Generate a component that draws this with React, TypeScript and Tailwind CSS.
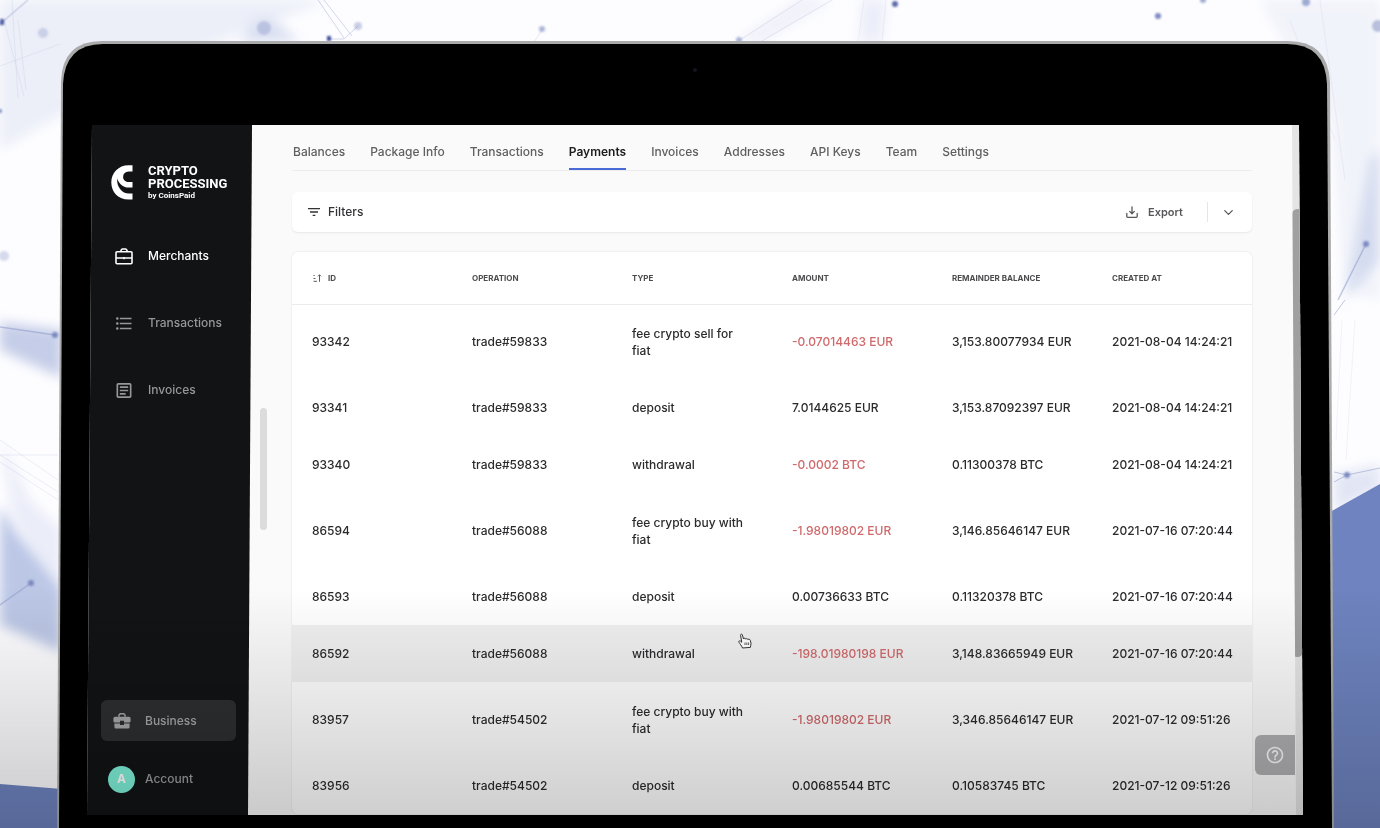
import React from "react";
import { MdFilterList, MdFormatListBulleted, MdHelpOutline, MdOutlineArticle } from "react-icons/md";
import { ChevronDown } from "lucide-react";

const TABS = ["Balances", "Package Info", "Transactions", "Payments", "Invoices", "Addresses", "API Keys", "Team", "Settings"];
const COLUMNS = ["ID", "Operation", "Type", "Amount", "Remainder balance", "Created at"];

type Row = [string, string, string, string, string, string];

const ROWS: Row[] = [
  ["93342", "trade#59833", "fee crypto sell for fiat", "-0.07014463 EUR", "3,153.80077934 EUR", "2021-08-04 14:24:21"],
  ["93341", "trade#59833", "deposit", "7.0144625 EUR", "3,153.87092397 EUR", "2021-08-04 14:24:21"],
  ["93340", "trade#59833", "withdrawal", "-0.0002 BTC", "0.11300378 BTC", "2021-08-04 14:24:21"],
  ["86594", "trade#56088", "fee crypto buy with fiat", "-1.98019802 EUR", "3,146.85646147 EUR", "2021-07-16 07:20:44"],
  ["86593", "trade#56088", "deposit", "0.00736633 BTC", "0.11320378 BTC", "2021-07-16 07:20:44"],
  ["86592", "trade#56088", "withdrawal", "-198.01980198 EUR", "3,148.83665949 EUR", "2021-07-16 07:20:44"],
  ["83957", "trade#54502", "fee crypto buy with fiat", "-1.98019802 EUR", "3,346.85646147 EUR", "2021-07-12 09:51:26"],
  ["83956", "trade#54502", "deposit", "0.00685544 BTC", "0.10583745 BTC", "2021-07-12 09:51:26"],
];

function Backdrop() {
  return (
    <svg className="absolute inset-0 h-full w-full" viewBox="0 0 1380 828" preserveAspectRatio="none" aria-hidden="true">
      <defs>
        <filter id="soft" x="-20%" y="-20%" width="140%" height="140%">
          <feGaussianBlur stdDeviation="6" />
        </filter>
        <filter id="dot" x="-60%" y="-60%" width="220%" height="220%">
          <feGaussianBlur stdDeviation="1" />
        </filter>
      </defs>
      <rect width="1380" height="828" fill="#fdfdff" />
      <g filter="url(#soft)" fill="#dfe3f3">
        <path d="M0 0H330L130 75L0 150Z" opacity=".55" />
        <path d="M240 42L256 20H274L300 42Z" fill="#ccd4ec" opacity=".7" />
        <path d="M0 322L62 330V378L0 350Z" fill="#c5cde8" />
        <path d="M0 440L30 500L62 530V600L14 520Z" opacity=".6" />
        <path d="M0 505L14 530L62 590V652L0 625Z" fill="#bcc7e6" />
        <path d="M800 0H832L760 42H735Z" opacity=".5" />
        <path d="M862 0H886L882 42H860Z" opacity=".6" />
        <path d="M1260 0H1380V300L1345 290L1332 120Z" opacity=".4" />
        <path d="M1370 160L1380 150V260L1345 300Z" fill="#ccd4ec" opacity=".8" />
        <path d="M1334 475L1380 465V490L1334 512Z" opacity=".9" />
      </g>
      <g stroke="#8e9bc9" strokeWidth="1" fill="none" opacity=".55">
        <path d="M0 24L28 0" strokeWidth="2" opacity=".5" />
        <path d="M4 20L24 96M12 0L18 98M18 20L26 90M0 66L60 44" opacity=".25" />
        <path d="M318 0L344 38M324 0L352 36M329 39H344L358 26" opacity=".7" />
        <path d="M534 42L542 30M740 40L802 0M760 42L832 0" opacity=".4" />
        <path d="M864 0L858 42M886 0L882 42" opacity=".2" />
        <path d="M0 327L55 335M0 605L31 583M1366 244L1338 300" strokeWidth="1.5" />
        <path d="M0 455H58M0 440L58 480M0 455L58 492M0 462L58 500" opacity=".3" />
        <path d="M1334 472L1347 475L1380 468M1334 482L1347 475M1334 315L1345 300" />
        <path d="M1290 20L1335 140M1320 0L1345 180M1355 320L1346 460M1342 320L1336 440" opacity=".2" />
      </g>
      <g filter="url(#dot)" fill="#7b89bf">
        <rect x="0" y="19" width="4" height="6" fill="#4f5fa6" />
        <circle cx="43" cy="33" r="5" opacity=".3" />
        <circle cx="264" cy="28" r="7" opacity=".35" />
        <rect x="327" y="36" width="4" height="5" fill="#3f4f9c" />
        <circle cx="358" cy="26" r="4" opacity=".4" />
        <circle cx="542" cy="29" r="3" opacity=".6" />
        <circle cx="739" cy="40" r="3" opacity=".6" />
        <circle cx="895" cy="4" r="3" fill="#5b69a8" />
        <circle cx="1158" cy="16" r="3" />
        <circle cx="1203" cy="0" r="3" opacity=".7" />
        <circle cx="1306" cy="2" r="4" opacity=".7" />
        <circle cx="1378" cy="26" r="6" opacity=".5" />
        <circle cx="4" cy="256" r="5" opacity=".3" />
        <circle cx="0" cy="111" r="2" />
        <circle cx="55" cy="335" r="3" />
        <circle cx="31" cy="583" r="3" />
        <circle cx="1366" cy="244" r="3" />
        <circle cx="1347" cy="475" r="3" />
      </g>
      <path d="M1330 512L1380 484V828H1330Z" fill="#6e83bf" />
      <path d="M0 784L62 789V828H0Z" fill="#6e83bf" />
      <path d="M57 828L61 82Q62 41 102 41H1288Q1328 41 1330 82L1334 828Z" fill="#a9aaa9" />
      <path d="M59 828L63 84Q65 44 103 44H1287Q1325 44 1327 84L1332 828Z" fill="#000" />
      <circle cx="695" cy="70" r="2" fill="#14141c" />
    </svg>
  );
}

function LogoMark() {
  return (
    <svg className="h-[35px] w-[22px]" viewBox="0 0 22 35" fill="#fff" aria-hidden="true">
      <path d="M21.500 .3V6.500H17.500A5.400 5.400 0 0 0 12.100 12C12.100 15.500 15 17 17.500 17H21.500V22.600H18C11 22.600 7.300 17.500 6.200 13.200C5.300 21.500 11 28.600 18 28.600H21.500V34.600H17.500C7.500 34.600 .3 27 .3 17.400S7.500 .3 17.500 .3Z" />
    </svg>
  );
}

function CaseOutline() {
  return (
    <svg className="h-[17px] w-[18px]" viewBox="0 0 18 17" fill="none" stroke="currentColor" strokeWidth="1.600" strokeLinejoin="round" aria-hidden="true">
      <rect x="1" y="3.800" width="16" height="12" rx="1" />
      <path d="M6 3.800V2.300L7.200 1H10.800L12 2.300V3.800M1 10H17M9 9V11.300" />
    </svg>
  );
}

function CaseSolid() {
  return (
    <svg className="h-[18px] w-[18px]" viewBox="0 0 18 18" fill="currentColor" aria-hidden="true">
      <path d="M2 4.800H16A1.600 1.600 0 0 1 17.600 6.400V9A1.600 1.600 0 0 1 16 10.600H11V8.800H7V10.600H2A1.600 1.600 0 0 1 .4 9V6.400A1.600 1.600 0 0 1 2 4.800ZM1.400 11.600H7V13H11V11.600H16.600V15A1.600 1.600 0 0 1 15 16.600H3A1.600 1.600 0 0 1 1.400 15Z" />
      <path d="M6 4.800V3L7.200 1.800H10.800L12 3V4.800" fill="none" stroke="currentColor" strokeWidth="1.500" />
    </svg>
  );
}

function ExportIcon() {
  return (
    <svg className="h-3 w-3" viewBox="0 0 12 12" fill="none" stroke="currentColor" strokeWidth="1.300" strokeLinecap="round" strokeLinejoin="round" aria-hidden="true">
      <path d="M.8 7.500V10.300Q.8 11.300 1.800 11.300H10.200Q11.200 11.300 11.200 10.300V7.500M6 .8V7.600M3.700 5.400L6 7.700L8.300 5.400" />
    </svg>
  );
}

function SortIcon() {
  return (
    <svg className="h-2 w-[10px]" viewBox="0 0 10 8" fill="none" stroke="currentColor" strokeWidth=".9" aria-hidden="true">
      <path d="M1.500 1.500H2.700M1.500 4.500H3.500M1.500 7.300H5M7.500 7.800V.8M6 2.300L7.500 .8L9 2.300" />
    </svg>
  );
}

function HandCursor() {
  return (
    <svg className="h-4 w-[14px]" viewBox="0 0 14 16" fill="#fff" stroke="#333" strokeWidth="1" strokeLinejoin="round" aria-hidden="true">
      <path d="M4.500 15C3.500 12.500 2 11 1 9.300C.3 8 1.600 7.300 2.600 8.200L3.800 9.300L2.600 2.600C2.300 1 4 .6 4.400 2L5.500 6C6 5 7.400 5 7.700 6.100C8.300 5.200 9.700 5.500 9.900 6.600C10.600 5.900 12 6.200 12.300 7.300L13 10.300C13.200 12 12.400 13 12.300 14.400Z" />
      <path d="M7 9.500V12M8.800 9.500V12M10.600 9.500V12" strokeWidth=".8" />
    </svg>
  );
}

function SideLink({ icon, label, active }: { icon: React.ReactNode; label: string; active?: boolean }) {
  return (
    <a href="#" className={"flex h-5 items-center gap-[14px] text-xs font-medium " + (active ? "text-white" : "text-[#96979a]")}>
      <span className="flex w-5 justify-center">{icon}</span>
      {label}
    </a>
  );
}

function Sidebar() {
  return (
    <aside className="flex w-[165px] shrink-0 flex-col bg-[#111315] [clip-path:polygon(0_0,100%_0,161px_100%,0_100%)]">
      <div className="flex items-center gap-[15px] pl-6 pt-[39px]">
        <LogoMark />
        <div className="font-[Roboto,sans-serif] text-[13px] font-bold leading-[13px] text-white">
          <p>CRYPTO</p>
          <p>PROCESSING</p>
          <p className="text-[8px] leading-[11px]">by CoinsPaid</p>
        </div>
      </div>
      <nav className="flex flex-col gap-[47px] pl-[27px] pt-[45px]">
        <SideLink icon={<CaseOutline />} label="Merchants" active />
        <SideLink icon={<MdFormatListBulleted size={21} />} label="Transactions" />
        <SideLink icon={<MdOutlineArticle size={21} />} label="Invoices" />
      </nav>
      <div className="mt-auto flex flex-col pb-[22px] pl-[14px] pr-4">
        <button type="button" className="flex h-[41px] items-center gap-[14px] rounded-md bg-[#2d2e30] pl-3 text-xs font-medium text-[#a5a6a8]">
          <CaseSolid />
          Business
        </button>
        <button type="button" className="mt-6 flex h-7 items-center gap-[10px] pl-[7px] text-xs font-medium text-[#9b9c9e]">
          <span className="flex h-[27px] w-[27px] items-center justify-center rounded-full bg-[#7df0d8] text-xs font-bold text-white">A</span>
          Account
        </button>
      </div>
    </aside>
  );
}

function PaymentsTable() {
  return (
    <table className="w-full table-fixed border-collapse text-left">
      <thead>
        <tr className="h-[52px] border-b border-[#ececec] text-[8px] uppercase text-[#4c4c4e]">
          {COLUMNS.map((name, i) => (
            <th key={name} scope="col" className="pl-5 font-bold">
              <span className="flex items-center gap-[6px]">
                {i === 0 && <SortIcon />}
                {name}
              </span>
            </th>
          ))}
        </tr>
      </thead>
      <tbody className="text-xs font-medium leading-[17px] text-[#2b2b2d]">
        {ROWS.map((row) => (
          <tr key={row[0]} className={(row[2].startsWith("fee") ? "h-[75px] " : "h-[57px] ") + (row[0] === "86592" ? "bg-[#f0f0f0]" : "")}>
            {row.map((cell, i) => (
              <td key={i} className={"pl-5 " + (i === 2 ? "pr-5 " : "whitespace-nowrap ") + (i === 3 && cell.startsWith("-") ? "text-[#cf6a6c]" : "")}>
                {cell}
              </td>
            ))}
          </tr>
        ))}
      </tbody>
    </table>
  );
}

export default function App() {
  return (
    <div className="relative flex h-screen overflow-hidden pb-[13px] pl-[87px] pr-[77px] pt-[125px] font-[Inter,sans-serif]">
      <Backdrop />
      <div className="relative flex min-w-0 flex-1 overflow-hidden bg-[#fafafa] [clip-path:polygon(5px_0,calc(100%_-_4px)_0,100%_100%,0_100%)]">
        <Sidebar />
        <main className="min-w-0 flex-1 pl-10 pr-[51px]">
          <nav className="flex h-[46px] gap-[25px] border-b border-[#ececec] pl-px text-xs font-medium text-[#606062]">
            {TABS.map((tab) => (
              <a
                key={tab}
                href="#"
                className={"flex h-[45px] items-center whitespace-nowrap border-b-2 pt-[10px] " + (tab === "Payments" ? "border-[#4a6bd6] font-semibold text-[#1c1c1e]" : "border-transparent")}
              >
                {tab}
              </a>
            ))}
          </nav>
          <div className="mt-[21px] flex h-10 items-center justify-between rounded-md bg-white pl-[14px] pr-4 shadow-[0_1px_2px_rgba(0,0,0,0.08)]">
            <button type="button" className="flex items-center gap-[6px] text-xs font-medium text-[#333335]">
              <MdFilterList size={16} />
              Filters
            </button>
            <div className="flex items-center text-[#58585a]">
              <button type="button" className="flex items-center gap-[10px] pr-6 text-[11px] font-semibold">
                <ExportIcon />
                Export
              </button>
              <button type="button" aria-label="Export options" className="flex h-5 items-center border-l border-[#e6e6e6] pl-[13px]">
                <ChevronDown size={15} />
              </button>
            </div>
          </div>
          <section className="mt-5 rounded-md bg-white shadow-[0_0_2px_rgba(0,0,0,0.12)]">
            <PaymentsTable />
          </section>
        </main>
        <div className="absolute left-[173px] top-[283px] h-[122px] w-[7px] rounded-full bg-[#dcdcdc]" />
        <div className="absolute bottom-0 right-0 top-0 w-[11px] bg-[#e4e4e4] [clip-path:polygon(0_0,100%_0,100%_100%,4px_100%)]">
          <div className="mt-[84px] h-[448px] rounded-full bg-[#a0a0a0]" />
        </div>
        <button type="button" aria-label="Help" className="absolute bottom-10 right-2 flex h-10 w-10 items-center justify-center rounded-l-md bg-[#aeaeb0] text-[#f4f4f4]">
          <MdHelpOutline size={20} />
        </button>
        <div className="absolute left-[651px] top-[508px]">
          <HandCursor />
        </div>
      </div>
      <div className="pointer-events-none absolute inset-x-0 bottom-0 h-[240px] bg-linear-to-b from-transparent to-black/20" />
    </div>
  );
}
